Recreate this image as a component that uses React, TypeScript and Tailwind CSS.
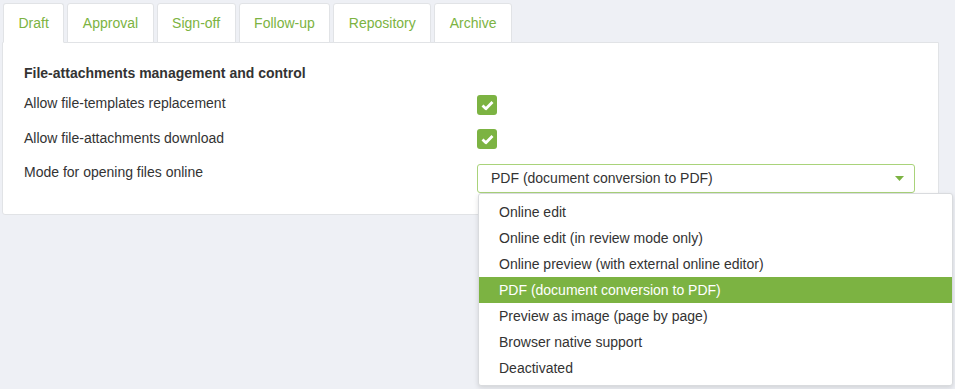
import React, { useState } from 'react';

const tabs = ['Draft', 'Approval', 'Sign-off', 'Follow-up', 'Repository', 'Archive'];

const modes = [
  'Online edit',
  'Online edit (in review mode only)',
  'Online preview (with external online editor)',
  'PDF (document conversion to PDF)',
  'Preview as image (page by page)',
  'Browser native support',
  'Deactivated',
];

// Green checked box
const CheckBox: React.FC<{ className?: string }> = ({ className = '' }) => (
  <div className={`w-5 h-5 rounded-[3px] bg-[#7cb342] flex items-center justify-center ${className}`}>
    <svg width="13" height="11" viewBox="0 0 13 11">
      <path d="M1.5 5.6 L4.9 8.8 L11.5 2" fill="none" stroke="#fff" strokeWidth="2.8" strokeLinejoin="round" />
    </svg>
  </div>
);

export default function App() {
  const [active, setActive] = useState(0);
  const selected = 3;

  return (
    <div className="min-h-screen bg-[#eef0f5] pt-[3px] pl-[2px] font-['Liberation_Sans',Arial,sans-serif] text-[14px] text-[#333]">
      <div className="w-[937px]">
        <div className="flex gap-[3px] pl-px relative z-10 -mb-px">
          {tabs.map((t, i) => (
            <button
              key={t}
              onClick={() => setActive(i)}
              className={
                'h-[40px] px-[14.5px] bg-white border border-[#e1e3e6] rounded-t-[3px] text-[#7cb342] leading-5 ' +
                (i === active ? 'border-b-white' : '')
              }
            >
              {t}
            </button>
          ))}
        </div>

        <div className="bg-white border border-[#e1e3e6] rounded-b-[3px] pl-[21px] pt-5 pb-[21px]">
          <div className="font-bold leading-5">File-attachments management and control</div>

          <div className="flex items-start h-[35px] mt-[10px]">
            <div className="w-[453px] leading-5">Allow file-templates replacement</div>
            <CheckBox className="mt-[2px]" />
          </div>

          <div className="flex items-start h-[34px]">
            <div className="w-[453px] leading-5">Allow file-attachments download</div>
            <CheckBox className="mt-[1px]" />
          </div>

          <div className="flex items-start">
            <div className="w-[453px] leading-5">Mode for opening files online</div>
            <div className="relative mt-[2px]">
              <div className="w-[438px] h-[29px] border border-[#a9d37a] rounded-[3px] flex items-center justify-between pl-[13px] pr-[10px] bg-white">
                <span>{modes[selected]}</span>
                <svg width="9" height="5" viewBox="0 0 9 5">
                  <path d="M0 0 H9 L4.5 5 Z" fill="#7cb342" />
                </svg>
              </div>

              <div className="absolute left-px top-[29px] w-[475px] bg-white border border-[#d9dbde] rounded-[3px] shadow-[0_2px_5px_rgba(0,0,0,0.12)] pt-[5px] pb-[4px] z-20">
                {modes.map((m, i) => (
                  <div
                    key={m}
                    className={
                      'h-[26px] pl-[20px] flex items-center ' +
                      (i === selected ? 'bg-[#7cb342] text-white' : 'text-[#333]')
                    }
                  >
                    {m}
                  </div>
                ))}
              </div>
            </div>
          </div>
        </div>
      </div>
    </div>
  );
}
